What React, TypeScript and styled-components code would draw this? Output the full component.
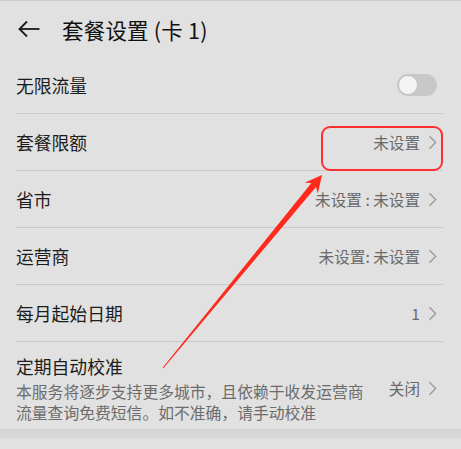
import styled, { createGlobalStyle } from 'styled-components';

const GlobalStyle = createGlobalStyle`
  html, body {
    margin: 0;
    padding: 0;
    background: #e1e1e1;
  }
  body {
    font-family: 'Noto Sans CJK SC', 'Noto Sans', sans-serif;
  }
`;

interface RowData {
  label: string;
  value: string;
}

const rows: RowData[] = [
  { label: '套餐限额', value: '未设置' },
  { label: '省市', value: '未设置 : 未设置' },
  { label: '运营商', value: '未设置: 未设置' },
  { label: '每月起始日期', value: '1' },
];

function Chevron() {
  return (
    <svg width="9" height="15" viewBox="0 0 9 15">
      <polyline points="1.5,1.2 7.6,7.5 1.5,13.8" fill="none" stroke="#9b9b9b" strokeWidth="1.4" />
    </svg>
  );
}

function BackArrow() {
  return (
    <svg width="22" height="18" viewBox="0 0 22 18">
      <polyline points="9,1.5 1.5,9 9,16.5" fill="none" stroke="#1a1a1a" strokeWidth="1.8" />
      <line x1="1.5" y1="9" x2="21.5" y2="9" stroke="#1a1a1a" strokeWidth="1.8" />
    </svg>
  );
}

function App() {
  return (
    <Page>
      <GlobalStyle />
      <Header>
        <BackArrow />
        <Title>套餐设置 (卡 1)</Title>
      </Header>
      <List>
        <Row>
          <Label>无限流量</Label>
          <Switch>
            <Knob />
          </Switch>
        </Row>
        {rows.map((r) => (
          <Row key={r.label}>
            <Label>{r.label}</Label>
            <Value>
              {r.value}
              <Chevron />
            </Value>
          </Row>
        ))}
        <TallRow>
          <TextCol>
            <Label>定期自动校准</Label>
            <Desc>
              本服务将逐步支持更多城市，且依赖于收发运营商
              <br />
              流量查询免费短信。如不准确，请手动校准
            </Desc>
          </TextCol>
          <Value>
            关闭
            <Chevron />
          </Value>
        </TallRow>
      </List>
      <Shadow />

      {/* 标注：红框 + 箭头 */}
      <Highlight />
      <ArrowLayer width="461" height="449" viewBox="0 0 461 449">
        <polygon
          points="322,174 317.8,192.5 316,185.9 163.4,367.3 162.6,366.7 311.4,182.1 304.6,181.7"
          fill="#ff2a1c"
        />
      </ArrowLayer>
    </Page>
  );
}

export default App;

const Page = styled.div`
  position: relative;
  width: 461px;
  height: 449px;
  overflow: hidden;
  background: #e1e1e1;
  border-top: 1px solid #cdcdcd;
  box-sizing: border-box;
`;

const Header = styled.div`
  display: flex;
  align-items: center;
  gap: 22px;
  height: 56px;
  padding-left: 18px;
  box-sizing: border-box;
`;

const Title = styled.span`
  font-size: 21.5px;
  font-weight: 400;
  color: #111111;
  letter-spacing: 0.2px;
`;

const List = styled.div`
  display: flex;
  flex-direction: column;
  margin: 0 18px 0 16px;
`;

const Row = styled.div`
  display: flex;
  align-items: center;
  justify-content: space-between;
  height: 57px;
  padding-right: 6px;
  border-bottom: 1px solid #cacaca;
  box-sizing: border-box;
`;

const TallRow = styled.div`
  display: flex;
  align-items: center;
  justify-content: space-between;
  padding: 11px 6px 6px 0;
`;

const TextCol = styled.div`
  display: flex;
  flex-direction: column;
`;

const Label = styled.span`
  font-size: 17.8px;
  color: #1c1c1c;
  line-height: 26px;
`;

const Desc = styled.div`
  font-size: 15.8px;
  line-height: 21px;
  color: #6c6c6c;
  margin-top: 2px;
`;

const Value = styled.span`
  display: flex;
  align-items: center;
  gap: 8px;
  font-size: 15.6px;
  color: #6a6a6a;
  white-space: nowrap;
`;

const Switch = styled.div`
  position: relative;
  width: 40px;
  height: 22px;
  border-radius: 11px;
  background: #c8c8c8;
`;

const Knob = styled.div`
  position: absolute;
  left: 1px;
  top: 1px;
  width: 18px;
  height: 18px;
  border-radius: 50%;
  background: #f4f4f4;
  border: 1px solid #c2c2c2;
`;

const Shadow = styled.div`
  height: 10px;
  background: linear-gradient(#d3d3d3, #dadada);
`;

const Highlight = styled.div`
  position: absolute;
  left: 321px;
  top: 125px;
  width: 122px;
  height: 45px;
  box-sizing: border-box;
  border: 2px solid #ff3030;
  border-radius: 9px;
`;

const ArrowLayer = styled.svg`
  position: absolute;
  left: 0;
  top: 0;
  pointer-events: none;
`;
